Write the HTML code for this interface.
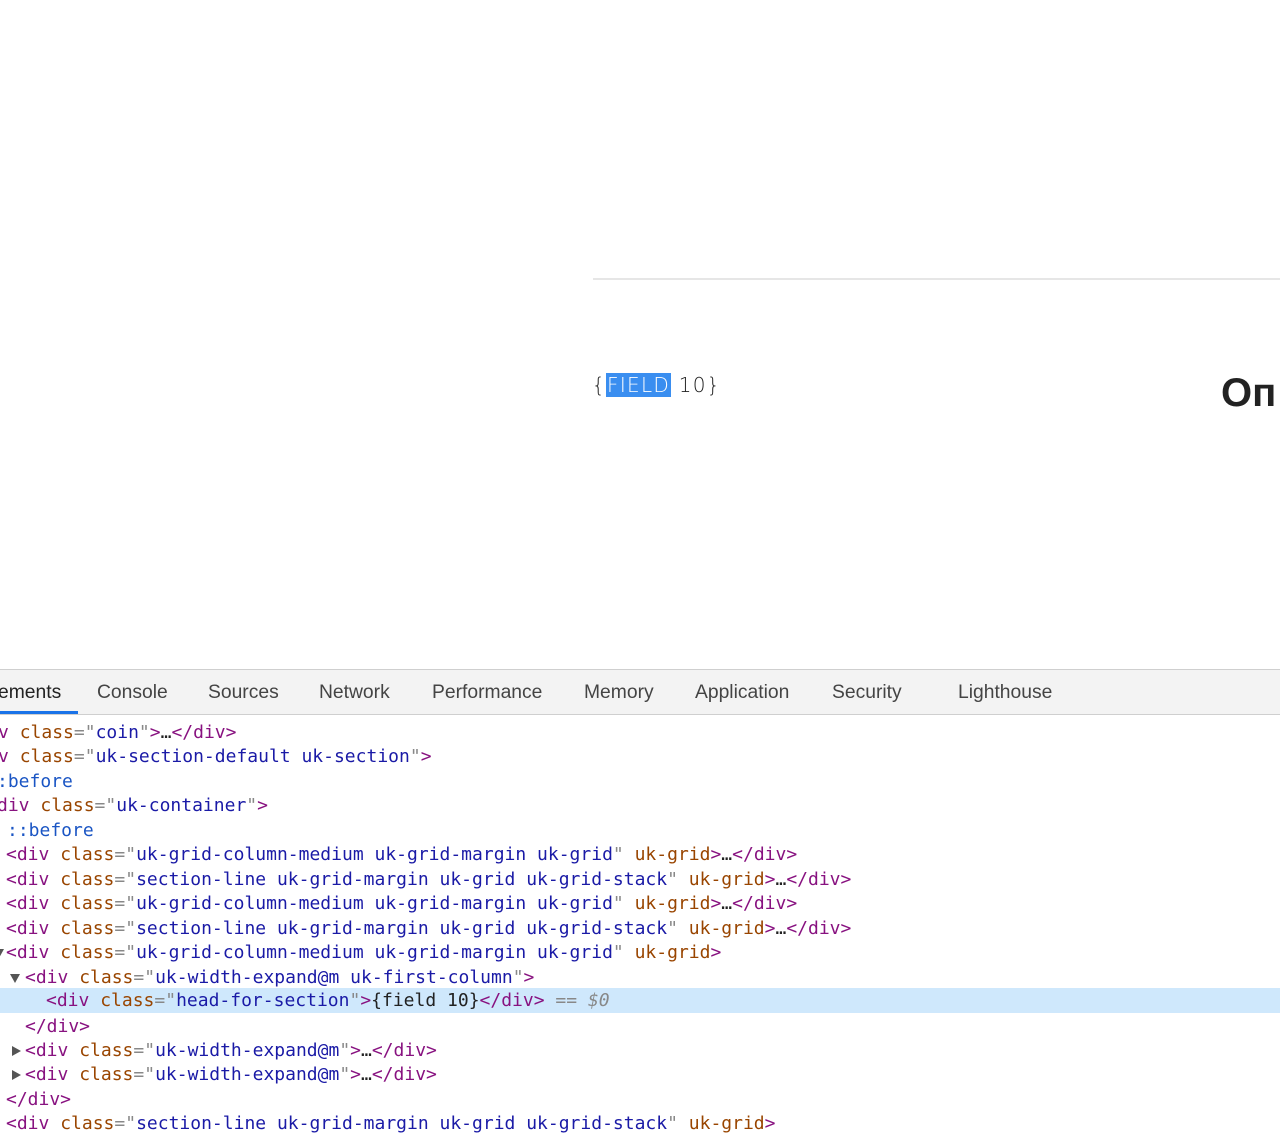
<!DOCTYPE html>
<html><head><meta charset="utf-8"><style>
body{margin:0;width:1280px;height:1118px;overflow:hidden;background:#fff;position:relative;font-family:"Liberation Sans",sans-serif}
.hr{position:absolute;left:593px;top:278px;width:687px;height:2px;background:#e6e6e6}
.field{position:absolute;left:592px;top:371px;font-size:20px;letter-spacing:1.3px;color:#222;font-family:"DejaVu Sans",sans-serif;font-weight:300;line-height:28px}
.field .sel{background:#3a8ef0;color:#fff;padding:0 1px}
.op{position:absolute;left:1221px;top:368px;font-size:40px;font-weight:bold;color:#222;line-height:50px}
.bar{position:absolute;left:0;top:669px;width:1280px;height:44px;background:#f3f3f3;border-top:1px solid #cfcfcf;border-bottom:1px solid #cfcfcf}
.tab{position:absolute;top:1px;line-height:44px;font-size:19.3px;color:#444}
.ul{position:absolute;left:0;top:41px;width:78px;height:3px;background:#1a73e8}
.l{position:absolute;height:24.5px;line-height:24.5px;white-space:pre;width:1400px;font-family:"DejaVu Sans Mono","Liberation Mono",monospace;font-size:18px}
.t{color:#881280}.a{color:#994500}.v{color:#1a1aa6}.p{color:#888}.k{color:#222}.b{color:#1a55c4}
.hl{position:absolute;left:0;top:988px;width:1280px;height:25px;background:#cfe8fc}
.tri{position:absolute;width:0;height:0;border-left:5px solid transparent;border-right:5px solid transparent;border-top:9px solid #555}
.tr{position:absolute;width:0;height:0;border-top:5px solid transparent;border-bottom:5px solid transparent;border-left:9px solid #555}
.c{position:absolute;left:0;top:2px;width:1280px;height:1118px}
</style></head><body>
<div class="hr"></div>
<div class="field">{<span class="sel">FIELD</span> 10}</div>
<div class="op">Оп</div>
<div class="bar">
<div class="tab" style="left:-2px;color:#222">ements</div>
<div class="tab" style="left:97px">Console</div>
<div class="tab" style="left:208px">Sources</div>
<div class="tab" style="left:319px">Network</div>
<div class="tab" style="left:432px">Performance</div>
<div class="tab" style="left:584px">Memory</div>
<div class="tab" style="left:695px">Application</div>
<div class="tab" style="left:832px">Security</div>
<div class="tab" style="left:958px">Lighthouse</div>
<div class="ul"></div>
</div>
<div class="hl"></div>
<div class="c">
<div class="l" style="left:-2px;top:719px"><span class="t">v</span> <span class="a">class</span><span class="p">="</span><span class="v">coin</span><span class="p">"</span><span class="t">&gt;</span><span class="k">…</span><span class="t">&lt;/div&gt;</span></div>
<div class="l" style="left:-2px;top:743px"><span class="t">v</span> <span class="a">class</span><span class="p">="</span><span class="v">uk-section-default uk-section</span><span class="p">"</span><span class="t">&gt;</span></div>
<div class="l" style="left:-3px;top:768px"><span class="b">:before</span></div>
<div class="l" style="left:-3px;top:792px"><span class="t">div</span> <span class="a">class</span><span class="p">="</span><span class="v">uk-container</span><span class="p">"</span><span class="t">&gt;</span></div>
<div class="l" style="left:7px;top:817px"><span class="b">::before</span></div>
<div class="l" style="left:6px;top:841px"><span class="t">&lt;div</span> <span class="a">class</span><span class="p">="</span><span class="v">uk-grid-column-medium uk-grid-margin uk-grid</span><span class="p">"</span> <span class="a">uk-grid</span><span class="t">&gt;</span><span class="k">…</span><span class="t">&lt;/div&gt;</span></div>
<div class="l" style="left:6px;top:866px"><span class="t">&lt;div</span> <span class="a">class</span><span class="p">="</span><span class="v">section-line uk-grid-margin uk-grid uk-grid-stack</span><span class="p">"</span> <span class="a">uk-grid</span><span class="t">&gt;</span><span class="k">…</span><span class="t">&lt;/div&gt;</span></div>
<div class="l" style="left:6px;top:890px"><span class="t">&lt;div</span> <span class="a">class</span><span class="p">="</span><span class="v">uk-grid-column-medium uk-grid-margin uk-grid</span><span class="p">"</span> <span class="a">uk-grid</span><span class="t">&gt;</span><span class="k">…</span><span class="t">&lt;/div&gt;</span></div>
<div class="l" style="left:6px;top:915px"><span class="t">&lt;div</span> <span class="a">class</span><span class="p">="</span><span class="v">section-line uk-grid-margin uk-grid uk-grid-stack</span><span class="p">"</span> <span class="a">uk-grid</span><span class="t">&gt;</span><span class="k">…</span><span class="t">&lt;/div&gt;</span></div>
<div class="tri" style="left:-6px;top:947px"></div>
<div class="l" style="left:6px;top:939px"><span class="t">&lt;div</span> <span class="a">class</span><span class="p">="</span><span class="v">uk-grid-column-medium uk-grid-margin uk-grid</span><span class="p">"</span> <span class="a">uk-grid</span><span class="t">&gt;</span></div>
<div class="tri" style="left:10px;top:972px"></div>
<div class="l" style="left:25px;top:964px"><span class="t">&lt;div</span> <span class="a">class</span><span class="p">="</span><span class="v">uk-width-expand@m uk-first-column</span><span class="p">"</span><span class="t">&gt;</span></div>
<div class="l" style="left:46px;top:987px"><span class="t">&lt;div</span> <span class="a">class</span><span class="p">="</span><span class="v">head-for-section</span><span class="p">"</span><span class="t">&gt;</span><span class="k">{field 10}</span><span class="t">&lt;/div&gt;</span> <span class="p">==</span> <i class="p">$0</i></div>
<div class="l" style="left:25px;top:1013px"><span class="t">&lt;/div&gt;</span></div>
<div class="tr" style="left:12px;top:1044px"></div>
<div class="l" style="left:25px;top:1037px"><span class="t">&lt;div</span> <span class="a">class</span><span class="p">="</span><span class="v">uk-width-expand@m</span><span class="p">"</span><span class="t">&gt;</span><span class="k">…</span><span class="t">&lt;/div&gt;</span></div>
<div class="tr" style="left:12px;top:1068px"></div>
<div class="l" style="left:25px;top:1061px"><span class="t">&lt;div</span> <span class="a">class</span><span class="p">="</span><span class="v">uk-width-expand@m</span><span class="p">"</span><span class="t">&gt;</span><span class="k">…</span><span class="t">&lt;/div&gt;</span></div>
<div class="l" style="left:6px;top:1086px"><span class="t">&lt;/div&gt;</span></div>
<div class="l" style="left:6px;top:1110px"><span class="t">&lt;div</span> <span class="a">class</span><span class="p">="</span><span class="v">section-line uk-grid-margin uk-grid uk-grid-stack</span><span class="p">"</span> <span class="a">uk-grid</span><span class="t">&gt;</span></div>
</div>
</body></html>
